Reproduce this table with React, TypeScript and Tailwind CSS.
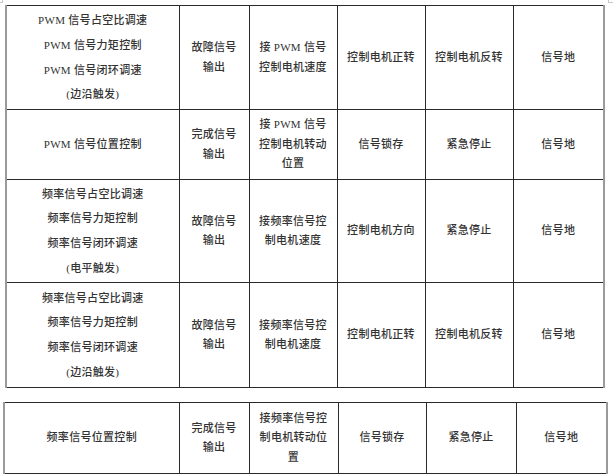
import React from "react";

/** 单元格内容：每个元素为一行 */
type Row = {
  mode: string[];
  loose: boolean; // 第一列是否为多行宽行距
  out: string[];
  input: string[];
  a: string[];
  b: string[];
  gnd: string;
  h: number;
};

const rows: Row[] = [
  {
    mode: ["PWM 信号占空比调速", "PWM 信号力矩控制", "PWM 信号闭环调速", "(边沿触发)"],
    loose: true,
    out: ["故障信号", "输出"],
    input: ["接 PWM 信号", "控制电机速度"],
    a: ["控制电机正转"],
    b: ["控制电机反转"],
    gnd: "信号地",
    h: 104,
  },
  {
    mode: ["PWM 信号位置控制"],
    loose: false,
    out: ["完成信号", "输出"],
    input: ["接 PWM 信号", "控制电机转动", "位置"],
    a: ["信号锁存"],
    b: ["紧急停止"],
    gnd: "信号地",
    h: 70,
  },
  {
    mode: ["频率信号占空比调速", "频率信号力矩控制", "频率信号闭环调速", "(电平触发)"],
    loose: true,
    out: ["故障信号", "输出"],
    input: ["接频率信号控", "制电机速度"],
    a: ["控制电机方向"],
    b: ["紧急停止"],
    gnd: "信号地",
    h: 103,
  },
  {
    mode: ["频率信号占空比调速", "频率信号力矩控制", "频率信号闭环调速", "(边沿触发)"],
    loose: true,
    out: ["故障信号", "输出"],
    input: ["接频率信号控", "制电机速度"],
    a: ["控制电机正转"],
    b: ["控制电机反转"],
    gnd: "信号地",
    h: 105,
  },
];

const lastRow: Row = {
  mode: ["频率信号位置控制"],
  loose: false,
  out: ["完成信号", "输出"],
  input: ["接频率信号控", "制电机转动位", "置"],
  a: ["信号锁存"],
  b: ["紧急停止"],
  gnd: "信号地",
  h: 71,
};

function Lines({ items, loose }: { items: string[]; loose?: boolean }) {
  return (
    <div className={loose ? "leading-[24.7px]" : "leading-[19.5px]"}>
      {items.map((t, i) => (
        <div key={i}>{t}</div>
      ))}
    </div>
  );
}

const cell = "border border-[#2a2a2a] text-center align-middle p-0";

function DataTable({ data, widths }: { data: Row[]; widths: number[] }) {
  return (
    <table className="table-fixed border-collapse border-x-2 border-x-[#9a9a9a]">
      <colgroup>
        {widths.map((w, i) => (
          <col key={i} style={{ width: w }} />
        ))}
      </colgroup>
      <tbody>
        {data.map((r, i) => (
          <tr key={i} style={{ height: r.h }}>
            <td className={`${cell} border-l-2 border-l-[#9a9a9a]`}>
              <Lines items={r.mode} loose={r.loose} />
            </td>
            <td className={cell}>
              <Lines items={r.out} />
            </td>
            <td className={cell}>
              <Lines items={r.input} />
            </td>
            <td className={cell}>
              <Lines items={r.a} />
            </td>
            <td className={cell}>
              <Lines items={r.b} />
            </td>
            <td className={`${cell} border-r-2 border-r-[#9a9a9a]`}>
              <Lines items={[r.gnd]} />
            </td>
          </tr>
        ))}
      </tbody>
    </table>
  );
}

export default function App() {
  return (
    <div className="relative w-[613px] h-[476px] overflow-hidden bg-white text-[11px] font-medium tracking-[0.3px] text-[#333333] font-['Liberation_Serif','Noto_Sans_CJK_SC',serif]">
      {/* 页面裁切角标 */}
      <div className="absolute left-0 top-0 h-[3px] w-[3px] border-r border-b border-[#c8c8c8]" />
      <div className="absolute right-0 top-0 h-[3px] w-[5px] border-l border-b border-[#c8c8c8]" />

      <div className="pt-[5px] pl-[5px]">
        <DataTable data={rows} widths={[173, 70, 88, 88, 88, 91]} />
      </div>
      <div className="pt-[14px] pl-[3px]">
        <DataTable data={[lastRow]} widths={[175, 70, 89, 88, 90, 91]} />
      </div>
    </div>
  );
}
